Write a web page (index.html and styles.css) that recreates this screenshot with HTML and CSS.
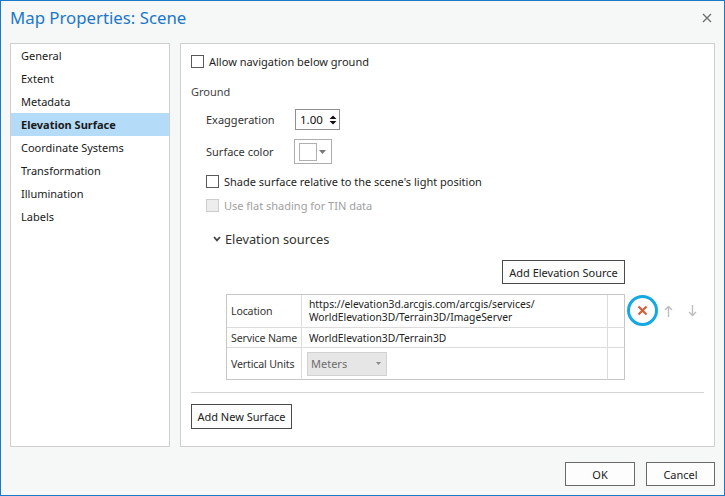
FILE: index.html
```html
<!DOCTYPE html>
<html>
<head>
<meta charset="utf-8">
<link rel="stylesheet" href="styles.css">
</head>
<body>
<div class="dialog">
  <header class="titlebar">
    <span class="title">Map Properties: Scene</span>
    <svg class="close" width="10" height="10" viewBox="0 0 10 10"><path d="M1 1L9 9M9 1L1 9" stroke="#6f6f6f" stroke-width="1.3"/></svg>
  </header>
  <div class="main">
    <ul class="nav">
      <li>General</li>
      <li>Extent</li>
      <li>Metadata</li>
      <li class="active">Elevation Surface</li>
      <li>Coordinate Systems</li>
      <li>Transformation</li>
      <li>Illumination</li>
      <li>Labels</li>
    </ul>
    <section class="content">
      <div class="check"><span class="box"></span><span>Allow navigation below ground</span></div>
      <div class="group-title">Ground</div>
      <div class="field exag">
        <span class="flabel">Exaggeration</span>
        <div class="spinner"><span>1.00</span><svg width="8" height="12" viewBox="0 0 8 12"><path d="M4 1.5L7.5 5H0.5Z M4 10.5L7.5 7H0.5Z" fill="#111"/></svg></div>
      </div>
      <div class="field colorrow">
        <span class="flabel">Surface color</span>
        <div class="colorbtn"><span class="swatch"></span><svg width="7" height="4" viewBox="0 0 7 4"><path d="M0 0H7L3.5 4Z" fill="#777"/></svg></div>
      </div>
      <div class="check sub shade"><span class="box"></span><span>Shade surface relative to the scene's light position</span></div>
      <div class="check sub disabled flat"><span class="box"></span><span>Use flat shading for TIN data</span></div>
      <div class="expander"><svg width="8" height="6" viewBox="0 0 8 6"><path d="M1 1L4 4.3L7 1" stroke="#444" stroke-width="1.8" fill="none"/></svg><span>Elevation sources</span></div>
      <div class="sources">
        <div class="add-row"><button class="btn add-source">Add Elevation Source</button></div>
        <div class="table-row">
          <div class="grid">
            <div class="cell label r1">Location</div>
            <div class="cell value r1 url">https://elevation3d.arcgis.com/arcgis/services/<br>WorldElevation3D/Terrain3D/ImageServer</div>
            <div class="cell last r1"></div>
            <div class="cell label r2">Service Name</div>
            <div class="cell value r2">WorldElevation3D/Terrain3D</div>
            <div class="cell last r2"></div>
            <div class="cell label r3 bottom">Vertical Units</div>
            <div class="cell value r3 bottom"><div class="select"><span>Meters</span><svg width="5" height="3" viewBox="0 0 5 3"><path d="M0 0H5L2.5 3Z" fill="#888"/></svg></div></div>
            <div class="cell last r3 bottom"></div>
          </div>
          <div class="icons">
            <svg class="remove" width="31" height="31" viewBox="0 0 31 31"><circle cx="15.5" cy="15.5" r="14" stroke="#15a8e3" stroke-width="3" fill="none"/><path d="M11.5 11.5L19.5 19.5M19.5 11.5L11.5 19.5" stroke="#d4603c" stroke-width="2.2"/></svg>
            <svg class="up" width="9" height="12" viewBox="0 0 9 12"><path d="M4.5 1.5V12M1 5L4.5 1.5L8 5" stroke="#bdbdbd" stroke-width="1.4" fill="none"/></svg>
            <svg class="down" width="9" height="12" viewBox="0 0 9 12"><path d="M4.5 0V10.5M1 7L4.5 10.5L8 7" stroke="#bdbdbd" stroke-width="1.4" fill="none"/></svg>
          </div>
        </div>
      </div>
      <div class="sep"></div>
      <button class="btn add-surface">Add New Surface</button>
    </section>
  </div>
  <footer class="footer">
    <button class="btn ok">OK</button>
    <button class="btn cancel">Cancel</button>
  </footer>
</div>
</body>
</html>
```
FILE: styles.css
```css
html, body {
  margin: 0;
  padding: 0;
}

.dialog {
  width: 725px;
  height: 496px;
  box-sizing: border-box;
  border: 1px solid #1a7ac9;
  background: #f6f7f7;
  display: flex;
  flex-direction: column;
  font-family: "Noto Sans", sans-serif;
  font-size: 11px;
  color: #1e1e1e;
}

.titlebar {
  height: 42px;
  box-sizing: border-box;
  padding: 0 12px 8px 9px;
  display: flex;
  align-items: center;
  justify-content: space-between;
}

.title {
  font-size: 16.8px;
  color: #1b78c8;
  line-height: 20px;
}

.main {
  height: 404px;
  display: flex;
  gap: 10px;
  padding: 0 9px;
}

.nav {
  width: 160px;
  box-sizing: border-box;
  border: 1px solid #cfcfcf;
  background: #fff;
  margin: 0;
  padding: 0;
  list-style: none;
}

.nav li {
  height: 23px;
  line-height: 23px;
  padding-left: 10px;
  color: #1a1a1a;
}

.nav li.active {
  background: #b4dbf7;
  font-weight: bold;
}

.content {
  flex: 1;
  box-sizing: border-box;
  border: 1px solid #cfcfcf;
  background: #fff;
  padding: 7px 10px 0;
  display: flex;
  flex-direction: column;
  align-items: flex-start;
}

.check {
  display: flex;
  align-items: center;
  height: 20px;
  gap: 5px;
  white-space: nowrap;
}

.box {
  width: 13px;
  height: 13px;
  box-sizing: border-box;
  border: 1px solid #5a5a5a;
  background: #fff;
}

.check.sub {
  margin-left: 15px;
}

.shade {
  margin-top: 7px;
}

.flat {
  margin-top: 4px;
}

.check.disabled {
  color: #a0a0a0;
}

.check.disabled .box {
  border-color: #cdcdcd;
  background: #ededed;
}

.group-title {
  margin-top: 11px;
  height: 20px;
  line-height: 20px;
  color: #444;
}

.field {
  display: flex;
  align-items: center;
  padding-left: 15px;
}

.flabel {
  width: 89px;
  color: #333;
}

.exag {
  margin-top: 7px;
  height: 21px;
}

.spinner {
  width: 45px;
  height: 21px;
  box-sizing: border-box;
  border: 1px solid #8f8f8f;
  display: flex;
  align-items: center;
  justify-content: space-between;
  padding: 0 2px 0 4px;
  font-size: 11.5px;
  color: #111;
}

.colorrow {
  margin-top: 9px;
  height: 25px;
}

.colorbtn {
  margin-left: -1px;
  width: 38px;
  height: 25px;
  box-sizing: border-box;
  border: 1px solid #adadad;
  display: flex;
  align-items: center;
  padding: 0 5px 0 4px;
  justify-content: space-between;
}

.swatch {
  width: 18px;
  height: 18px;
  box-sizing: border-box;
  border: 1px solid #b0b0b0;
  background: #fff;
}

.expander {
  margin-top: 14px;
  height: 20px;
  padding-left: 22px;
  display: flex;
  align-items: center;
  gap: 4px;
  font-size: 12.8px;
  color: #333;
}

.sources {
  margin-top: 11px;
  margin-left: 35px;
}

.add-row {
  width: 399px;
  display: flex;
  justify-content: flex-end;
}

.btn {
  font-family: "Noto Sans", sans-serif;
  font-size: 11px;
  color: #222;
  background: #fdfdfd;
  border: 1px solid #4a4a4a;
  padding: 0;
  margin: 0;
  height: 24px;
  box-sizing: border-box;
}

.add-source {
  width: 123px;
}

.table-row {
  margin-top: 10px;
  display: flex;
  align-items: flex-start;
}

.grid {
  display: grid;
  grid-template-columns: 75px 306px 17px;
  grid-template-rows: 33px 20px 32px;
  border-left: 1px solid #c6c6c6;
  border-top: 1px solid #c6c6c6;
}

.cell {
  border-right: 1px solid #dcdcdc;
  border-bottom: 1px solid #dcdcdc;
  display: flex;
  align-items: center;
  white-space: nowrap;
  overflow: hidden;
}

.cell.last {
  border-right-color: #c6c6c6;
}

.cell.bottom {
  border-bottom-color: #c6c6c6;
}

.cell.label {
  padding-left: 4px;
  color: #333;
  font-size: 10.6px;
  letter-spacing: -0.15px;
}

.cell.value {
  padding-left: 7px;
  font-size: 10.3px;
  color: #222;
}

.cell.url {
  line-height: 13px;
}

.select {
  margin-left: -2px;
  width: 80px;
  height: 24px;
  box-sizing: border-box;
  background: #e6e6e6;
  border: 1px solid #d2d2d2;
  display: flex;
  align-items: center;
  justify-content: space-between;
  padding: 0 5px 0 3px;
  font-size: 11px;
  color: #6d6d6d;
}

.icons {
  margin-top: 1px;
  margin-left: 2px;
  display: flex;
  align-items: center;
}

.up {
  margin-left: 6px;
}

.down {
  margin-left: 15px;
}

.sep {
  margin-top: 12px;
  align-self: stretch;
  border-top: 1px solid #d5d5d5;
}

.add-surface {
  margin-top: 11px;
  width: 101px;
  height: 25px;
}

.footer {
  display: flex;
  justify-content: flex-end;
  gap: 11px;
  padding: 15px 9px 0;
}

.ok {
  width: 70px;
  border-color: #6a6a6a;
}

.cancel {
  width: 69px;
  border-color: #6a6a6a;
}
```
